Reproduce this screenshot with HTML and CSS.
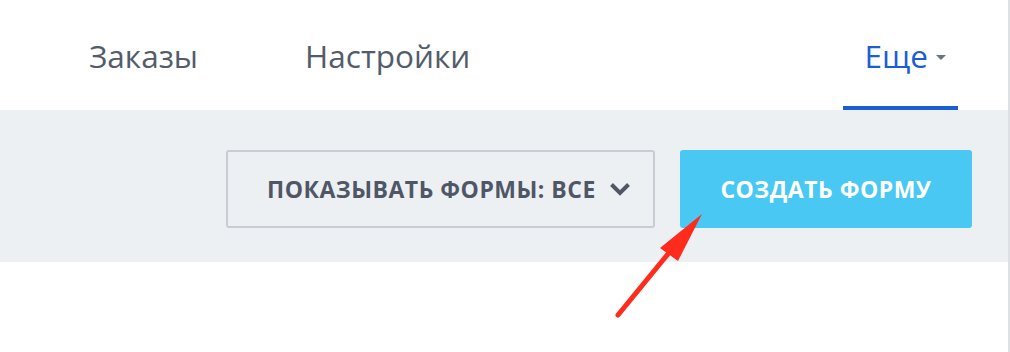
FILE: index.html
```html
<!DOCTYPE html>
<html lang="ru">
<head>
  <meta charset="UTF-8">
  <title>Формы</title>
  <meta name="viewport" content="width=device-width, initial-scale=1.0">
  <link rel="stylesheet" href="styles.css">
</head>
<body>
  <div class="page">
    <!-- Top tabs -->
    <nav class="tabs">
      <a class="tab tab-orders" href="#">Заказы</a>
      <a class="tab tab-settings" href="#">Настройки</a>
      <a class="tab tab-more active" href="#">Еще <span class="caret"></span></a>
    </nav>

    <!-- Toolbar -->
    <div class="toolbar">
      <button class="btn btn-filter" type="button">
        <span>ПОКАЗЫВАТЬ ФОРМЫ: ВСЕ</span>
        <svg class="chevron" width="22" height="14" viewBox="0 0 22 14" aria-hidden="true">
          <path d="M2.5 2.5 L11 11 L19.5 2.5" fill="none" stroke="#4f5766" stroke-width="4"/>
        </svg>
      </button>
      <button class="btn btn-create" type="button">СОЗДАТЬ ФОРМУ</button>
    </div>

    <div class="content"></div>

    <!-- annotation arrow -->
    <svg class="arrow" width="120" height="130" viewBox="0 0 120 130" aria-hidden="true">
      <line x1="20" y1="116" x2="70" y2="55" stroke="#ff2b1c" stroke-width="5" stroke-linecap="round"/>
      <polygon points="104,15 62,49 80,62" fill="#ff2b1c"/>
    </svg>
  </div>
</body>
</html>
```

FILE: styles.css
```css
html, body {
  margin: 0;
  height: 100%;
  background: #fff;
}
body {
  font-family: "Open Sans", "Liberation Sans", sans-serif;
  overflow: hidden;
}
.page {
  position: relative;
  width: 1008px;
  height: 352px;
  border-right: 2px solid #dde1e6;
}

/* Tabs */
.tabs {
  display: flex;
  align-items: stretch;
  height: 110px;
  padding-left: 67px;
  padding-right: 50px;
}
.tab {
  display: flex;
  align-items: center;
  padding: 0 22px;
  font-size: 31.5px;
  color: #535c6a;
  text-decoration: none;
  box-sizing: border-box;
  border-bottom: 4px solid transparent;
  padding-top: 4px;
}
.tab-settings {
  margin-left: 63px;
}
.tab-more {
  margin-left: auto;
  padding-right: 12px;
}
.tab.active {
  color: #1a5fd2;
  border-bottom-color: #1a5fd2;
}
.caret {
  display: inline-block;
  width: 0;
  height: 0;
  margin-left: 8px;
  margin-top: 4px;
  border-left: 5px solid transparent;
  border-right: 5px solid transparent;
  border-top: 5px solid #6b7380;
}

/* Toolbar */
.toolbar {
  display: flex;
  justify-content: flex-end;
  gap: 25px;
  background: #edf0f3;
  padding: 40px 36px 34px 0;
}
.btn {
  height: 78px;
  box-sizing: border-box;
  border-radius: 3px;
  font-family: "Open Sans", "Liberation Sans", sans-serif;
  font-weight: 700;
  font-size: 23px;
  letter-spacing: 0.5px;
  cursor: pointer;
  display: flex;
  align-items: center;
}
.btn-filter {
  width: 429px;
  background: #edf0f3;
  border: 2px solid #c8cdd3;
  color: #4f5766;
  padding: 0 22px 0 39px;
  justify-content: space-between;
}
.btn-filter .chevron {
  display: block;
  margin-top: -1px;
}
.btn-create {
  width: 292px;
  background: #48c8f2;
  border: none;
  color: #fff;
  justify-content: center;
}

.content {
  height: 90px;
}

/* annotation overlay */
.arrow {
  position: absolute;
  left: 598px;
  top: 199px;
}
```
